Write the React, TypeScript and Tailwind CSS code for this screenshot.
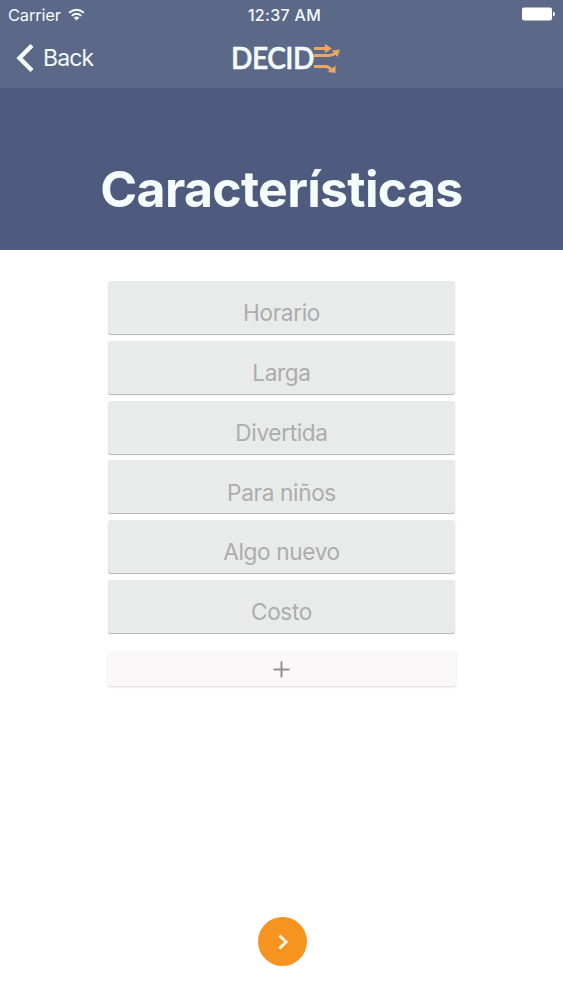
const features = ["Horario", "Larga", "Divertida", "Para niños", "Algo nuevo", "Costo"];

function WifiIcon() {
  return (
    <svg className="ml-[7px] h-[14px] w-[17px]" viewBox="0 0 18 14" fill="none" stroke="#f2fbff" strokeWidth="2">
      <path d="M1.2 4.6Q9-1.8 16.8 4.6M4 7.8Q9 3.6 14 7.8" />
      <path d="M6 9.8Q9 7.2 12 9.8L9 12.8Z" fill="#f2fbff" stroke="none" />
    </svg>
  );
}

function Logo() {
  return (
    <div className="flex h-8 items-center">
      <span className="w-[82px] whitespace-nowrap">
        <span className="inline-block origin-left scale-x-[0.91] font-['Lato'] text-[31px] leading-[30px] font-semibold tracking-[-0.6px] text-[#f2fbff] [-webkit-text-stroke:0.5px_#f2fbff]">
          DECID
        </span>
      </span>
      <svg className="h-8 w-[28px]" viewBox="0 0 28 32" fill="none" stroke="#eba75f" strokeWidth="3">
        <path d="M1 6.5H13M1 13.5H16Q19 13.5 23 11M1 24.5H13Q15 24.5 18 27.5" />
        <path d="M12 2L19 6.5L12 11ZM19 8.5L27 7.5L24.5 15ZM22.5 23.5V31L14.5 30Z" fill="#eba75f" stroke="none" />
      </svg>
    </div>
  );
}

export default function App() {
  return (
    <main className="flex h-[1000px] w-[563px] flex-col overflow-hidden bg-white font-['Inter',sans-serif]">
      <header className="h-[88px] bg-[#5c6887] text-[#f2fbff]">
        <div className="grid h-[30px] grid-cols-3 items-center pr-[8px] pl-[8px]">
          <div className="-mt-px flex items-center leading-5">
            <span className="text-[16.5px] tracking-[-0.2px]">Carrier</span>
            <WifiIcon />
          </div>
          <span className="-mt-px pl-[6px] text-center text-[16px] font-medium tracking-[0.3px] whitespace-nowrap">12:37 AM</span>
          <svg className="-mt-[2px] h-[14px] w-[34px] justify-self-end" viewBox="0 0 34 14" fill="#fff">
            <rect x="1" y="0.5" width="30" height="13" rx="2" />
            <path d="M32 4.5Q34 5 34 7T32 9.5Z" />
          </svg>
        </div>
        <div className="grid h-[56px] grid-cols-3 items-center pr-4 pl-[16px]">
          <button className="flex items-center text-[23px] tracking-[-0.9px]">
            <svg className="mr-[9px] h-7 w-[18px]" viewBox="0 0 18 28" fill="none" stroke="#f2fbff" strokeWidth="4.4">
              <path d="M16 1.5L3.5 14L16 26.5" />
            </svg>
            Back
          </button>
          <div className="flex justify-center pl-[8px]">
            <Logo />
          </div>
        </div>
      </header>
      <section className="h-[162px] bg-[#4e5b7f] pt-[70px]">
        <h1 className="text-center text-[50px] leading-[62px] font-bold tracking-[-0.7px] text-[#f5fdff]">Características</h1>
      </section>
      <section className="mx-auto flex w-[347px] flex-col pt-[31px]">
        <div className="flex flex-col gap-[6.8px]">
          {features.map((name) => (
            <button
              key={name}
              className="h-[53px] rounded-[3px] bg-[#e9eaea] pt-[11.5px] text-[22.6px] tracking-[-0.35px] text-[#acadad] shadow-[0_1px_1px_rgba(0,0,0,0.3)]"
            >
              {name}
            </button>
          ))}
        </div>
        <button className="mt-[18px] -mr-px flex h-[35px] items-center justify-center rounded-[2px] bg-[#faf8f9] pt-[2px] pr-[2px] shadow-[0_1px_2px_rgba(0,0,0,0.16)]">
          <svg className="h-[17px] w-[17px]" viewBox="0 0 17 17" stroke="#929192" strokeWidth="2">
            <path d="M8.5 0.5V16.5M0.5 8.5H16.5" />
          </svg>
        </button>
      </section>
      <button className="mt-auto mb-[34px] ml-[258px] flex size-[49px] items-center justify-center rounded-full bg-[#f7941f]">
        <svg className="h-4 w-3" viewBox="0 0 12 16" fill="none" stroke="#fff7e8" strokeWidth="3">
          <path d="M2.5 1.5L9 8L2.5 14.5" />
        </svg>
      </button>
    </main>
  );
}
